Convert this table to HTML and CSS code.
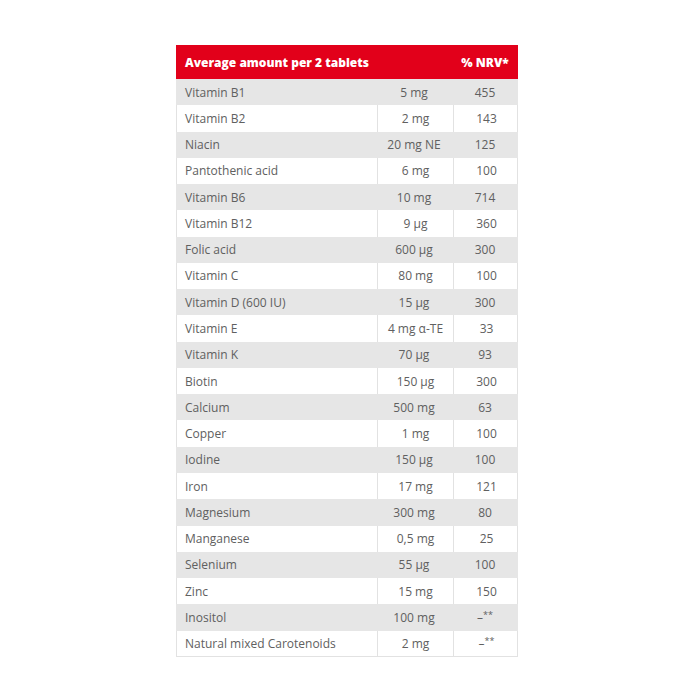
FILE: index.html
```html
<!DOCTYPE html>
<html>
<head>
<meta charset="utf-8">
<link rel="stylesheet" href="styles.css">
</head>
<body>
<div class="table">
  <div class="row head"><div class="c1 wide">Average amount per 2 tablets</div><div class="c3">% NRV*</div></div>
  <div class="row odd"><div class="c1">Vitamin B1</div><div class="c2">5 mg</div><div class="c3">455</div></div>
  <div class="row even"><div class="c1">Vitamin B2</div><div class="c2">2 mg</div><div class="c3">143</div></div>
  <div class="row odd"><div class="c1">Niacin</div><div class="c2">20 mg NE</div><div class="c3">125</div></div>
  <div class="row even"><div class="c1">Pantothenic acid</div><div class="c2">6 mg</div><div class="c3">100</div></div>
  <div class="row odd"><div class="c1">Vitamin B6</div><div class="c2">10 mg</div><div class="c3">714</div></div>
  <div class="row even"><div class="c1">Vitamin B12</div><div class="c2">9 µg</div><div class="c3">360</div></div>
  <div class="row odd"><div class="c1">Folic acid</div><div class="c2">600 µg</div><div class="c3">300</div></div>
  <div class="row even"><div class="c1">Vitamin C</div><div class="c2">80 mg</div><div class="c3">100</div></div>
  <div class="row odd"><div class="c1">Vitamin D (600 IU)</div><div class="c2">15 µg</div><div class="c3">300</div></div>
  <div class="row even"><div class="c1">Vitamin E</div><div class="c2">4 mg α-TE</div><div class="c3">33</div></div>
  <div class="row odd"><div class="c1">Vitamin K</div><div class="c2">70 µg</div><div class="c3">93</div></div>
  <div class="row even"><div class="c1">Biotin</div><div class="c2">150 µg</div><div class="c3">300</div></div>
  <div class="row odd"><div class="c1">Calcium</div><div class="c2">500 mg</div><div class="c3">63</div></div>
  <div class="row even"><div class="c1">Copper</div><div class="c2">1 mg</div><div class="c3">100</div></div>
  <div class="row odd"><div class="c1">Iodine</div><div class="c2">150 µg</div><div class="c3">100</div></div>
  <div class="row even"><div class="c1">Iron</div><div class="c2">17 mg</div><div class="c3">121</div></div>
  <div class="row odd"><div class="c1">Magnesium</div><div class="c2">300 mg</div><div class="c3">80</div></div>
  <div class="row even"><div class="c1">Manganese</div><div class="c2">0,5 mg</div><div class="c3">25</div></div>
  <div class="row odd"><div class="c1">Selenium</div><div class="c2">55 µg</div><div class="c3">100</div></div>
  <div class="row even"><div class="c1">Zinc</div><div class="c2">15 mg</div><div class="c3">150</div></div>
  <div class="row odd"><div class="c1">Inositol</div><div class="c2">100 mg</div><div class="c3">–<span class="ast">**</span></div></div>
  <div class="row even"><div class="c1">Natural mixed Carotenoids</div><div class="c2">2 mg</div><div class="c3">–<span class="ast">**</span></div></div>
</div>
</body>
</html>
```
FILE: styles.css
```css
html, body {
  margin: 0;
  padding: 0;
  background: #fff;
}
.table {
  width: 342px;
  margin: 45px 0 0 176px;
  font-family: "Open Sans", "Liberation Sans", sans-serif;
  font-size: 12px;
  color: #606060;
}
.row {
  display: grid;
  grid-template-columns: 200px 76px 66px;
  height: 26.27px;
  box-sizing: border-box;
}
.row > div {
  display: flex;
  align-items: center;
  box-sizing: border-box;
}
.c1 {
  padding-left: 9px;
}
.wide {
  grid-column: span 2;
  white-space: nowrap;
}
.c2, .c3 {
  justify-content: center;
}
.head {
  height: 34px;
  background: #e2001a;
  color: #fff;
  font-weight: 800;
  font-size: 12px;
}
.odd {
  background: #e6e6e6;
}
.even {
  background: #fff;
  border-left: 1px solid #e2e2e2;
  border-right: 1px solid #e2e2e2;
}
.even .c1 {
  padding-left: 8px;
}
.even .c2, .even .c3 {
  border-left: 1px solid #e2e2e2;
}
.row:last-child {
  border-bottom: 1px solid #e2e2e2;
}
.ast {
  font-size: 9px;
  position: relative;
  top: -3px;
}
```
